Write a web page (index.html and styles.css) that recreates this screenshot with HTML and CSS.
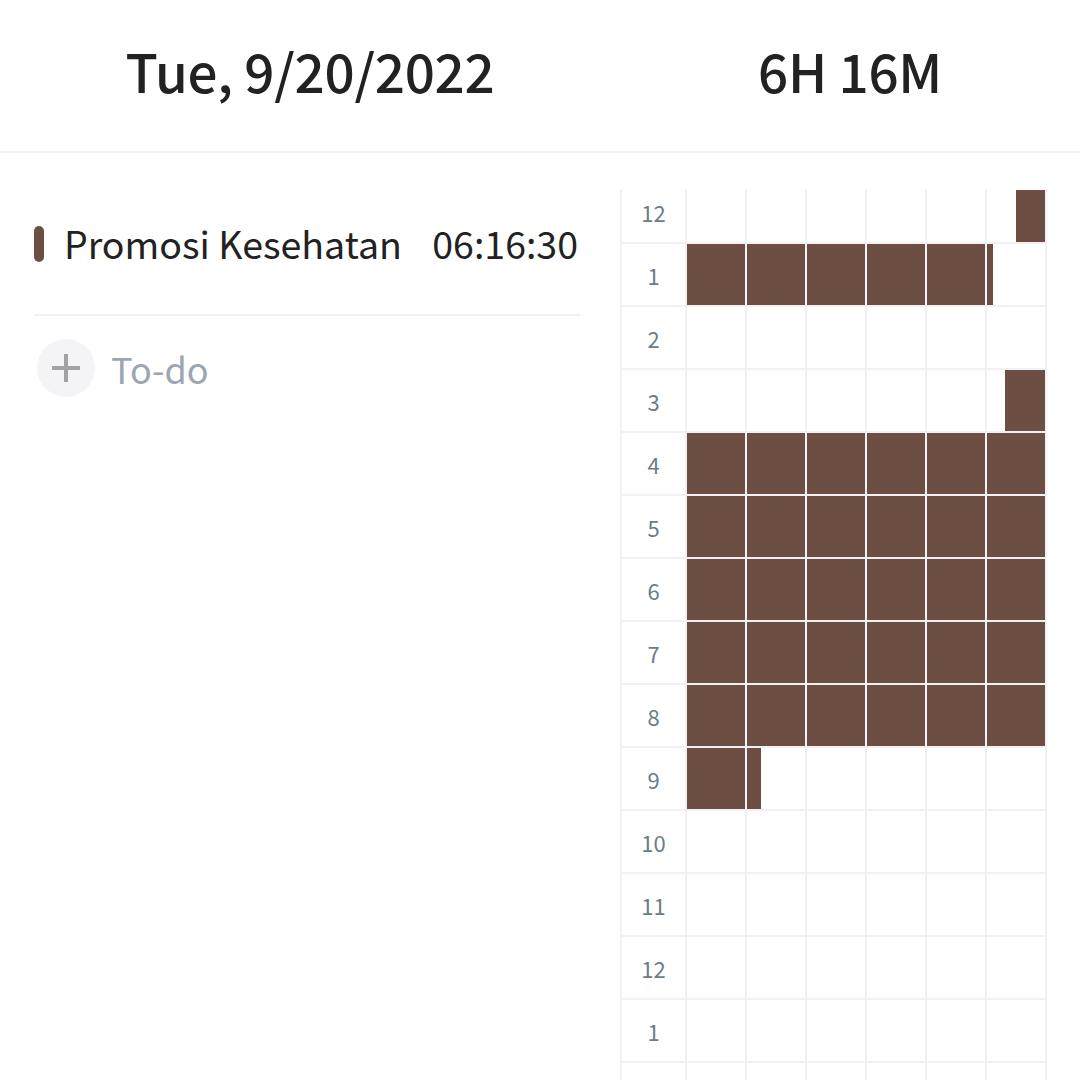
FILE: index.html
```html
<!DOCTYPE html>
<html>
<head>
<meta charset="utf-8">
<link rel="stylesheet" href="styles.css">
</head>
<body>
<div class="app">
  <header class="header">
    <div class="header-date">Tue, 9/20/2022</div>
    <div class="header-total">6H 16M</div>
  </header>
  <main class="body">
    <section class="tasks">
      <div class="task">
        <span class="task-bar"></span>
        <span class="task-name">Promosi Kesehatan</span>
        <span class="task-time">06:16:30</span>
      </div>
      <div class="divider"></div>
      <div class="todo">
        <span class="todo-btn">
          <svg viewBox="0 0 32 32" width="32" height="32"><path d="M16 2V30M2 16H30" stroke="#a3a3a3" stroke-width="4" fill="none"/></svg>
        </span>
        <span class="todo-label">To-do</span>
      </div>
    </section>
    <section class="timeline">
      <div class="viewport">
      <div class="grid">
        <div class="hour">12</div>
        <div class="cell"></div><div class="cell"></div><div class="cell"></div><div class="cell"></div><div class="cell"></div>
        <div class="cell"><span class="fill" style="margin-left:50%;width:50%"></span></div>

        <div class="hour">1</div>
        <div class="cell"><span class="fill"></span></div><div class="cell"><span class="fill"></span></div><div class="cell"><span class="fill"></span></div><div class="cell"><span class="fill"></span></div><div class="cell"><span class="fill"></span></div>
        <div class="cell"><span class="fill" style="width:10%"></span></div>

        <div class="hour">2</div>
        <div class="cell"></div><div class="cell"></div><div class="cell"></div><div class="cell"></div><div class="cell"></div><div class="cell"></div>

        <div class="hour">3</div>
        <div class="cell"></div><div class="cell"></div><div class="cell"></div><div class="cell"></div><div class="cell"></div>
        <div class="cell"><span class="fill" style="margin-left:31%;width:69%"></span></div>

        <div class="hour">4</div>
        <div class="cell"><span class="fill"></span></div><div class="cell"><span class="fill"></span></div><div class="cell"><span class="fill"></span></div><div class="cell"><span class="fill"></span></div><div class="cell"><span class="fill"></span></div><div class="cell"><span class="fill"></span></div>

        <div class="hour">5</div>
        <div class="cell"><span class="fill"></span></div><div class="cell"><span class="fill"></span></div><div class="cell"><span class="fill"></span></div><div class="cell"><span class="fill"></span></div><div class="cell"><span class="fill"></span></div><div class="cell"><span class="fill"></span></div>

        <div class="hour">6</div>
        <div class="cell"><span class="fill"></span></div><div class="cell"><span class="fill"></span></div><div class="cell"><span class="fill"></span></div><div class="cell"><span class="fill"></span></div><div class="cell"><span class="fill"></span></div><div class="cell"><span class="fill"></span></div>

        <div class="hour">7</div>
        <div class="cell"><span class="fill"></span></div><div class="cell"><span class="fill"></span></div><div class="cell"><span class="fill"></span></div><div class="cell"><span class="fill"></span></div><div class="cell"><span class="fill"></span></div><div class="cell"><span class="fill"></span></div>

        <div class="hour">8</div>
        <div class="cell"><span class="fill"></span></div><div class="cell"><span class="fill"></span></div><div class="cell"><span class="fill"></span></div><div class="cell"><span class="fill"></span></div><div class="cell"><span class="fill"></span></div><div class="cell"><span class="fill"></span></div>

        <div class="hour">9</div>
        <div class="cell"><span class="fill"></span></div>
        <div class="cell"><span class="fill" style="width:24%"></span></div>
        <div class="cell"></div><div class="cell"></div><div class="cell"></div><div class="cell"></div>

        <div class="hour">10</div>
        <div class="cell"></div><div class="cell"></div><div class="cell"></div><div class="cell"></div><div class="cell"></div><div class="cell"></div>

        <div class="hour">11</div>
        <div class="cell"></div><div class="cell"></div><div class="cell"></div><div class="cell"></div><div class="cell"></div><div class="cell"></div>

        <div class="hour">12</div>
        <div class="cell"></div><div class="cell"></div><div class="cell"></div><div class="cell"></div><div class="cell"></div><div class="cell"></div>

        <div class="hour">1</div>
        <div class="cell"></div><div class="cell"></div><div class="cell"></div><div class="cell"></div><div class="cell"></div><div class="cell"></div>

        <div class="hour"></div>
        <div class="cell"></div><div class="cell"></div><div class="cell"></div><div class="cell"></div><div class="cell"></div><div class="cell"></div>
      </div>
      </div>
    </section>
  </main>
</div>
</body>
</html>
```
FILE: styles.css
```css
* { box-sizing: border-box; }
html, body {
  margin: 0;
  padding: 0;
  background: #ffffff;
}
body {
  font-family: "Noto Sans CJK SC", "Noto Sans", sans-serif;
  color: #222222;
  width: 1080px;
  height: 1080px;
  overflow: hidden;
}
.app {
  display: flex;
  flex-direction: column;
  height: 1080px;
}
.header {
  display: grid;
  grid-template-columns: 620px 460px;
  height: 153px;
  border-bottom: 2px solid #f1f1f3;
  align-items: center;
  padding-bottom: 10px;
}
.header-date, .header-total {
  text-align: center;
  font-size: 53px;
  font-weight: 500;
  letter-spacing: -0.3px;
  line-height: 1;
  color: #222222;
}
.body {
  flex: 1;
  display: grid;
  grid-template-columns: 620px 460px;
  min-height: 0;
}
.tasks {
  padding: 59px 40px 0 34px;
}
.task {
  display: flex;
  align-items: center;
  height: 60px;
}
.task-bar {
  width: 10px;
  height: 36px;
  border-radius: 5px;
  background: #6d4e43;
  margin-right: 20px;
  margin-top: 4px;
}
.task-name {
  font-size: 37.5px;
  flex: 1;
}
.task-time {
  font-size: 37.5px;
  margin-right: 2px;
}
.divider {
  height: 2px;
  background: #f1f1f3;
  margin-top: 42px;
  margin-bottom: 23px;
}
.todo {
  display: flex;
  align-items: center;
  padding-left: 3px;
}
.todo-btn {
  width: 58px;
  height: 58px;
  border-radius: 50%;
  background: #f4f4f6;
  display: flex;
  align-items: center;
  justify-content: center;
  margin-right: 16px;
}
.todo-label {
  font-size: 36px;
  color: #9ca5b2;
}
.timeline {
  padding-top: 37px;
  display: flex;
  flex-direction: column;
  min-height: 0;
}
.viewport {
  flex: 1;
  overflow: hidden;
  min-height: 0;
}
.grid {
  display: grid;
  grid-template-columns: 63px repeat(6, 58px);
  grid-auto-rows: 61px;
  gap: 2px;
  padding: 0 2px;
  width: 427px;
  background: #f1f1f3;
  margin-top: -9px;
}
.hour {
  background: #ffffff;
  display: flex;
  align-items: center;
  justify-content: center;
  font-size: 22px;
  color: #6b7d87;
}
.cell {
  background: #ffffff;
  display: flex;
}
.fill {
  display: block;
  width: 100%;
  height: 100%;
  background: #6d4e43;
}
```
